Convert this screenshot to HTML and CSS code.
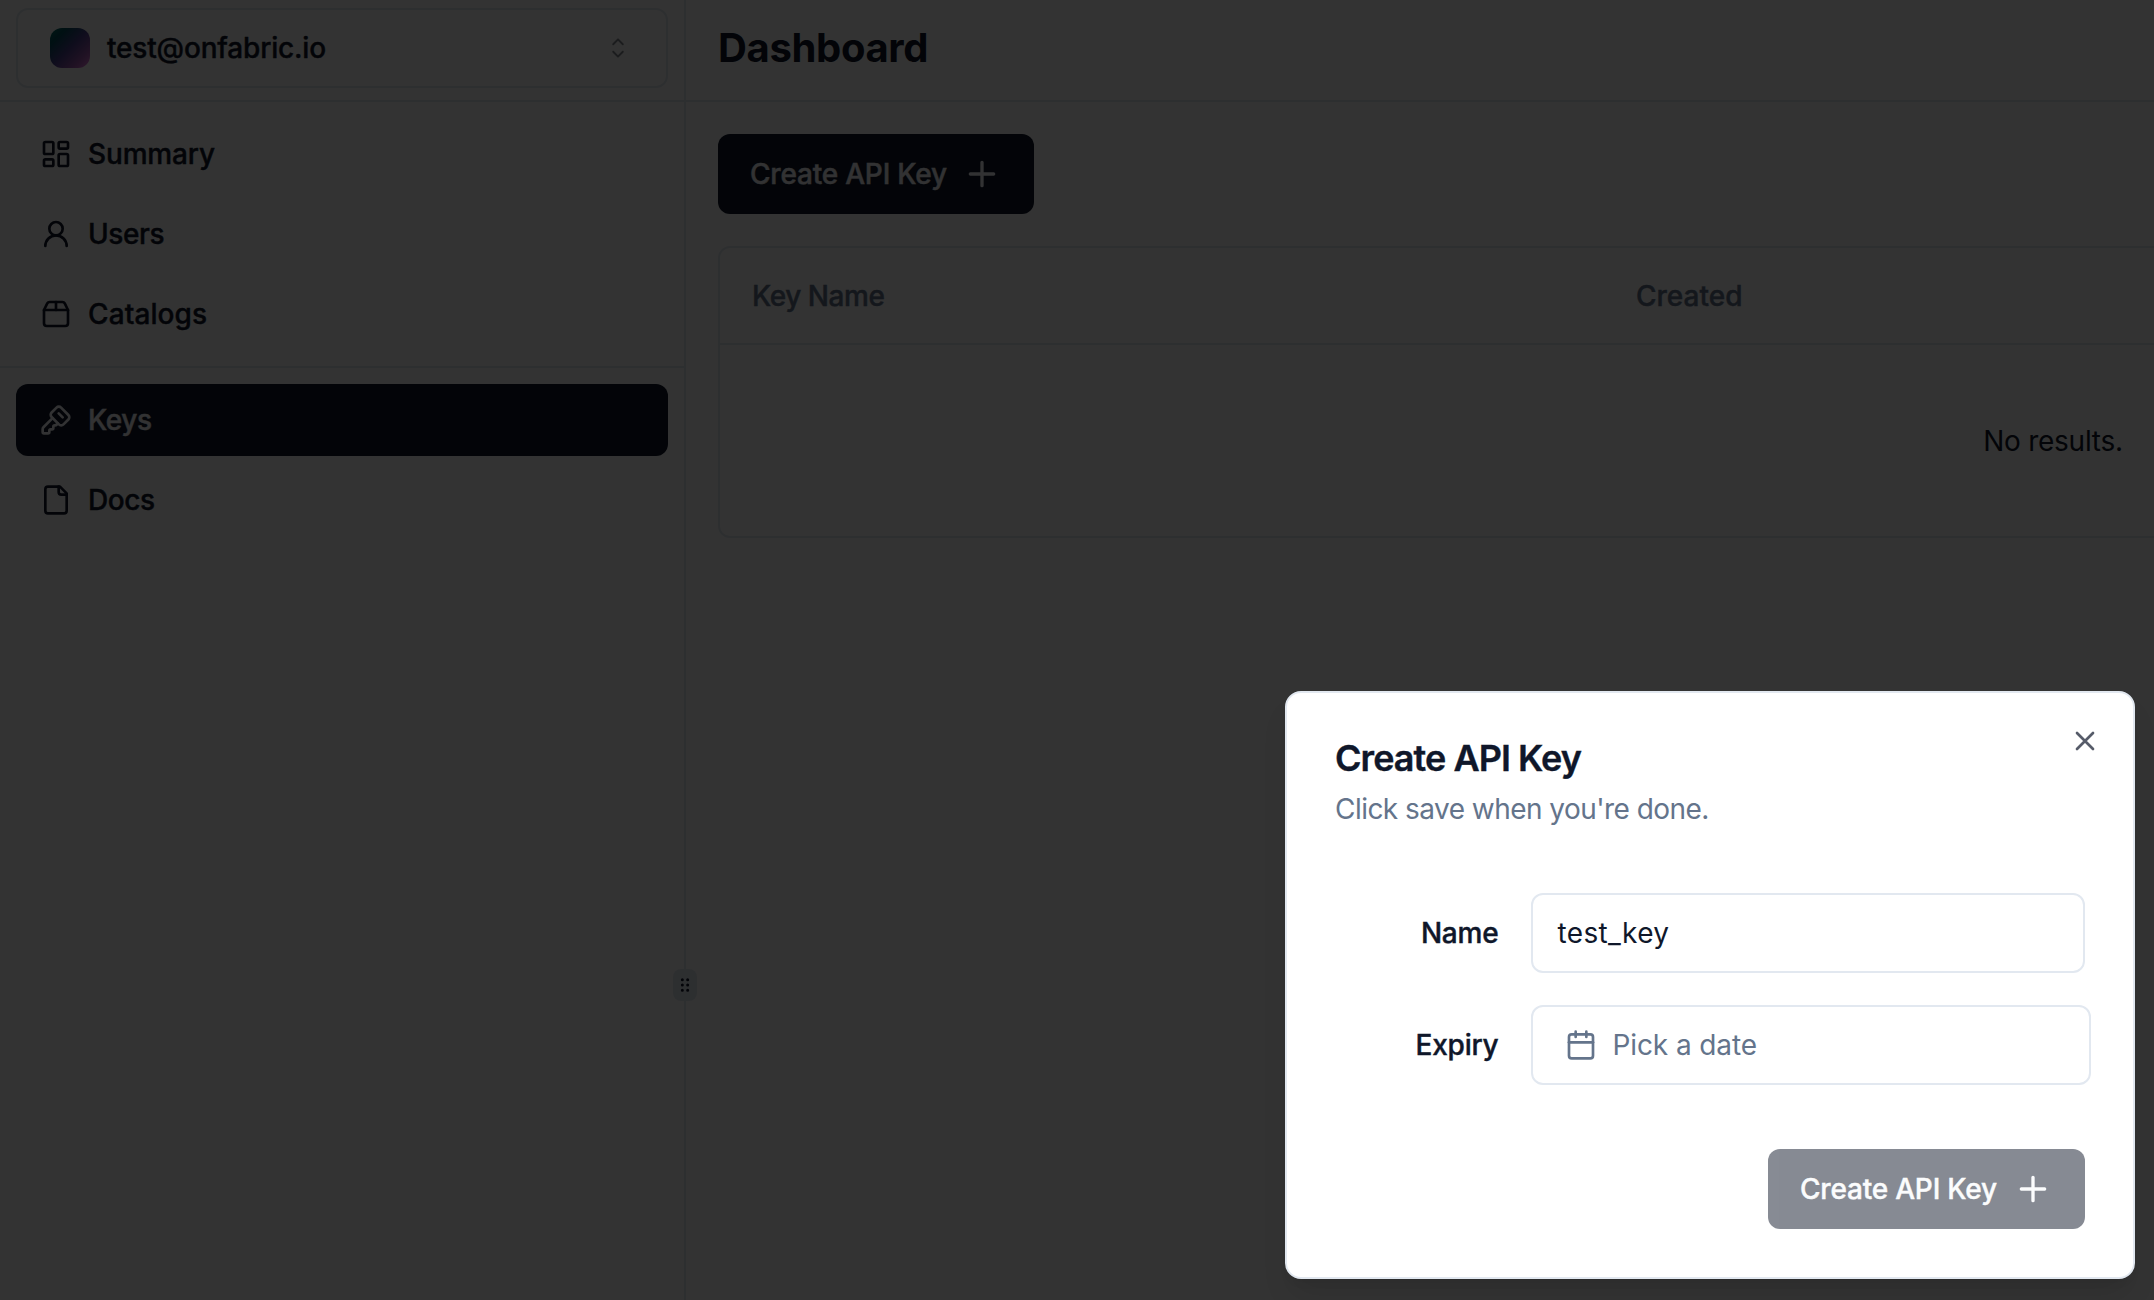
FILE: index.html
```html
<!DOCTYPE html>
<html lang="en">
<head>
<meta charset="utf-8">
<title>Dashboard</title>
<link rel="stylesheet" href="styles.css">
</head>
<body>
<div class="app">
  <aside class="sidebar">
    <div class="account-bar">
      <button class="account">
        <span class="avatar"></span>
        <span class="account-name">test@onfabric.io</span>
        <svg class="carets" viewBox="0 0 15 15" fill="currentColor"><path fill-rule="evenodd" clip-rule="evenodd" d="M4.93179 5.43179C4.75605 5.60753 4.75605 5.89245 4.93179 6.06819C5.10753 6.24392 5.39245 6.24392 5.56819 6.06819L7.49999 4.13638L9.43179 6.06819C9.60753 6.24392 9.89245 6.24392 10.0682 6.06819C10.2439 5.89245 10.2439 5.60753 10.0682 5.43179L7.81819 3.18179C7.73379 3.0974 7.61933 3.04999 7.49999 3.04999C7.38064 3.04999 7.26618 3.0974 7.18179 3.18179L4.93179 5.43179ZM10.0682 9.56819C10.2439 9.39245 10.2439 9.10753 10.0682 8.93179C9.89245 8.75606 9.60753 8.75606 9.43179 8.93179L7.49999 10.8636L5.56819 8.93179C5.39245 8.75606 5.10753 8.75606 4.93179 8.93179C4.75605 9.10753 4.75605 9.39245 4.93179 9.56819L7.18179 11.8182C7.35753 11.9939 7.64245 11.9939 7.81819 11.8182L10.0682 9.56819Z"/></svg>
      </button>
    </div>
    <nav class="nav nav-main">
      <a class="nav-item"><svg class="icon" viewBox="0 0 24 24"><rect width="7" height="9" x="3" y="3" rx="1"/><rect width="7" height="5" x="14" y="3" rx="1"/><rect width="7" height="9" x="14" y="12" rx="1"/><rect width="7" height="5" x="3" y="16" rx="1"/></svg><span class="t-summary">Summary</span></a>
      <a class="nav-item"><svg class="icon" viewBox="0 0 24 24"><circle cx="12" cy="8" r="5"/><path d="M20 21a8 8 0 0 0-16 0"/></svg><span class="t-users">Users</span></a>
      <a class="nav-item"><svg class="icon" viewBox="0 0 24 24"><path d="M3 9h18v10a2 2 0 0 1-2 2H5a2 2 0 0 1-2-2V9Z"/><path d="m3 9 2.45-4.9A2 2 0 0 1 7.24 3h9.52a2 2 0 0 1 1.8 1.1L21 9"/><path d="M12 3v6"/></svg><span class="t-catalogs">Catalogs</span></a>
    </nav>
    <nav class="nav">
      <a class="nav-item active"><svg class="icon" viewBox="0 0 24 24"><path d="M12.4 2.7c.9-.9 2.5-.9 3.4 0l5.5 5.5c.9.9.9 2.5 0 3.4l-3.7 3.7c-.9.9-2.5.9-3.4 0L8.7 9.8c-.9-.9-.9-2.5 0-3.4Z"/><path d="m14 7 3 3"/><path d="M9.4 10.6 2.6 17.4A2 2 0 0 0 2 18.8V21c0 .6.4 1 1 1h3c.6 0 1-.4 1-1v-1c0-.6.4-1 1-1h1c.6 0 1-.4 1-1v-1c0-.6.4-1 1-1h.2a2 2 0 0 0 1.4-.6l.8-.8"/></svg><span class="t-keys">Keys</span></a>
      <a class="nav-item"><svg class="icon" viewBox="0 0 24 24"><path d="M15 2H6a2 2 0 0 0-2 2v16a2 2 0 0 0 2 2h12a2 2 0 0 0 2-2V7Z"/><path d="M14 2v4a2 2 0 0 0 2 2h4"/></svg><span class="t-docs">Docs</span></a>
    </nav>
  </aside>
  <div class="divider">
    <div class="handle"><svg class="grip" viewBox="0 0 15 15" fill="currentColor"><path d="M5.5 4.625a1.125 1.125 0 1 0 0-2.25 1.125 1.125 0 0 0 0 2.25ZM9.5 4.625a1.125 1.125 0 1 0 0-2.25 1.125 1.125 0 0 0 0 2.25ZM5.5 8.625a1.125 1.125 0 1 0 0-2.25 1.125 1.125 0 0 0 0 2.25ZM9.5 8.625a1.125 1.125 0 1 0 0-2.25 1.125 1.125 0 0 0 0 2.25ZM5.5 12.625a1.125 1.125 0 1 0 0-2.25 1.125 1.125 0 0 0 0 2.25ZM9.5 12.625a1.125 1.125 0 1 0 0-2.25 1.125 1.125 0 0 0 0 2.25Z"/></svg></div>
  </div>
  <main class="main">
    <header class="topbar"><h1 class="page-title">Dashboard</h1></header>
    <section class="content">
      <button class="btn"><span class="btn-label">Create API Key</span><svg class="icon plus" viewBox="0 0 24 24"><path d="M5 12h14M12 5v14"/></svg></button>
      <div class="table">
        <div class="row head"><span class="cell"><span class="t-keyname">Key Name</span></span><span class="cell"><span class="t-created">Created</span></span></div>
        <div class="row empty"><span class="t-empty">No results.</span></div>
      </div>
    </section>
  </main>
</div>
<div class="overlay"></div>
<div class="dialog">
  <svg class="icon close" viewBox="0 0 24 24"><path d="M18 6 6 18M6 6l12 12"/></svg>
  <div class="dialog-head">
    <h2 class="dialog-title"><span class="t-title">Create API Key</span></h2>
    <p class="dialog-sub"><span class="t-sub">Click save when you're done.</span></p>
  </div>
  <div class="form">
    <label class="label"><span class="t-name">Name</span></label>
    <div class="field input"><span class="t-value">test_key</span></div>
    <label class="label"><span class="t-expiry">Expiry</span></label>
    <div class="field date"><svg class="icon" viewBox="0 0 24 24"><path d="M8 2v4M16 2v4"/><rect width="18" height="18" x="3" y="4" rx="2"/><path d="M3 10h18"/></svg><span class="t-date">Pick a date</span></div>
  </div>
  <div class="dialog-foot">
    <button class="btn disabled"><span class="btn-label">Create API Key</span><svg class="icon plus" viewBox="0 0 24 24"><path d="M5 12h14M12 5v14"/></svg></button>
  </div>
</div>
</body>
</html>
```
FILE: styles.css
```css
* { box-sizing: border-box; margin: 0; }
body {
  width: 2154px;
  height: 1300px;
  overflow: hidden;
  background: #fff;
  color: #0f172a;
  font: 400 28px/40px Inter, "Liberation Sans", sans-serif;
}
button { font: inherit; color: inherit; border: 0; background: none; }
span { white-space: nowrap; }
.icon {
  width: 32px;
  height: 32px;
  flex: none;
  fill: none;
  stroke: currentColor;
  stroke-width: 2;
  stroke-linecap: round;
  stroke-linejoin: round;
}

.app { display: flex; height: 1300px; }
.sidebar { width: 684px; flex: none; }
.account-bar { height: 102px; padding: 8px 16px 0; border-bottom: 2px solid #e2e8f0; }
.account {
  display: flex;
  align-items: center;
  width: 652px;
  height: 80px;
  padding: 0 32px;
  border: 2px solid #e2e8f0;
  border-radius: 12px;
  font-weight: 500;
}
.account-name { letter-spacing: -.18px; -webkit-text-stroke: .4px; }
.avatar {
  width: 40px;
  height: 40px;
  margin-right: 17px;
  border-radius: 12px;
  background: linear-gradient(135deg, #007a68 0%, #00505c 20%, #4c4290 50%, #a058b0 78%, #f080e0 100%);
}
.carets { width: 32px; height: 32px; margin-left: auto; opacity: .5; }
.nav { display: grid; gap: 8px; padding: 16px; }
.nav-main { border-bottom: 2px solid #e2e8f0; }
.nav-item {
  display: flex;
  align-items: center;
  gap: 16px;
  height: 72px;
  padding: 0 24px;
  border-radius: 12px;
  font-weight: 500;
  -webkit-text-stroke: .4px;
}
.nav-item.active { background: #0f172a; color: #f8fafc; }
.t-summary { letter-spacing: -.15px; }
.t-catalogs { letter-spacing: .1px; }
.t-users, .t-keys, .t-docs { letter-spacing: -.4px; }

.divider {
  display: flex;
  align-items: center;
  justify-content: center;
  width: 2px;
  flex: none;
  padding-top: 670px;
  background: #e2e8f0;
}
.handle {
  display: grid;
  place-items: center;
  width: 24px;
  height: 32px;
  flex: none;
  z-index: 1;
  border-radius: 8px;
  background: #e2e8f0;
}
.grip { width: 20px; height: 20px; }

.main { flex: 1; min-width: 0; overflow: hidden; }
.topbar {
  display: flex;
  align-items: center;
  height: 102px;
  padding: 0 32px 4px;
  border-bottom: 2px solid #e2e8f0;
}
.page-title { font-size: 40px; font-weight: 700; line-height: 56px; letter-spacing: -.35px; }
.content { display: grid; gap: 32px; justify-items: start; padding: 32px; }
.btn {
  display: flex;
  align-items: center;
  justify-content: space-between;
  width: 316px;
  height: 80px;
  padding: 0 32px;
  border-radius: 12px;
  background: #0f172a;
  color: #f8fafc;
  font-weight: 500;
}
.btn-label { letter-spacing: -.2px; -webkit-text-stroke: .4px; }
.plus { width: 40px; height: 40px; }
.table { width: 2670px; border: 2px solid #e2e8f0; border-radius: 12px; }
.row { display: grid; align-items: center; }
.head {
  grid-template-columns: 884px 1fr;
  height: 97px;
  border-bottom: 2px solid #e2e8f0;
  color: #64748b;
  font-weight: 500;
  -webkit-text-stroke: .4px;
}
.cell { padding: 0 32px; }
.t-keyname { letter-spacing: -.45px; }
.empty { height: 191px; justify-content: center; }
.t-empty { letter-spacing: -.25px; }

.overlay { position: absolute; inset: 0; z-index: 2; background: rgba(0, 0, 0, .8); }
.dialog {
  position: absolute;
  z-index: 3;
  left: 1285px;
  top: 691px;
  width: 850px;
  height: 588px;
  padding: 48px;
  border: 2px solid #e2e8f0;
  border-radius: 16px;
  background: #fff;
  box-shadow: 0 20px 30px -6px rgba(0, 0, 0, .1), 0 8px 12px -8px rgba(0, 0, 0, .1);
}
.close { position: absolute; top: 32px; right: 32px; opacity: .7; }
.dialog-head { display: grid; gap: 13px; }
.dialog-title { font-size: 36px; font-weight: 600; line-height: 35px; letter-spacing: -.95px; -webkit-text-stroke: .4px; }
.dialog-sub { color: #64748b; letter-spacing: -.54px; }
.form {
  display: grid;
  grid-template-columns: 163.5px 560px;
  gap: 32px;
  align-items: center;
  padding: 64px 0;
}
.label { text-align: right; font-weight: 500; letter-spacing: -.2px; -webkit-text-stroke: .4px; }
.field {
  display: flex;
  align-items: center;
  height: 80px;
  border: 2px solid #e2e8f0;
  border-radius: 12px;
}
.input { width: 554.5px; padding: 0 25px; letter-spacing: .35px; }
.date { gap: 16px; padding: 0 32px; color: #64748b; letter-spacing: -.1px; }
.dialog-foot { display: flex; justify-content: flex-end; }
.disabled { width: 317px; opacity: .5; }
```
